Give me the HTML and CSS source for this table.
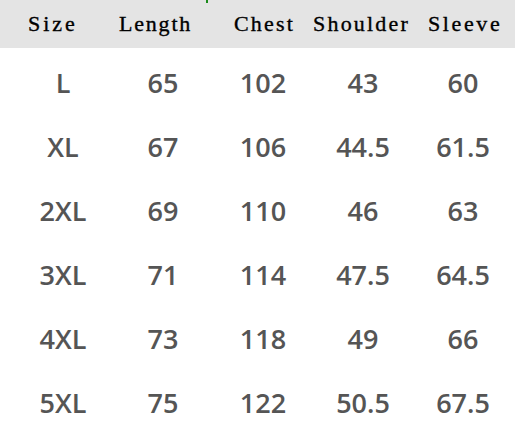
FILE: index.html
```html
<!DOCTYPE html>
<html>
<head>
<meta charset="utf-8">
<link rel="stylesheet" href="styles.css">
</head>
<body>
<div class="chart">
  <div class="head">
    <span class="mark"></span>
    <span class="h h-size">Size</span>
    <span class="h h-length">Length</span>
    <span class="h h-chest">Chest</span>
    <span class="h h-shoulder">Shoulder</span>
    <span class="h h-sleeve">Sleeve</span>
  </div>
  <div class="rows">
    <div class="c">L</div><div class="c">65</div><div class="c">102</div><div class="c">43</div><div class="c">60</div>
    <div class="c">XL</div><div class="c">67</div><div class="c">106</div><div class="c">44.5</div><div class="c">61.5</div>
    <div class="c">2XL</div><div class="c">69</div><div class="c">110</div><div class="c">46</div><div class="c">63</div>
    <div class="c">3XL</div><div class="c">71</div><div class="c">114</div><div class="c">47.5</div><div class="c">64.5</div>
    <div class="c">4XL</div><div class="c">73</div><div class="c">118</div><div class="c">49</div><div class="c">66</div>
    <div class="c">5XL</div><div class="c">75</div><div class="c">122</div><div class="c">50.5</div><div class="c">67.5</div>
  </div>
</div>
</body>
</html>
```

FILE: styles.css
```css
html, body {
  margin: 0;
  padding: 0;
  background: #ffffff;
}
.chart {
  width: 515px;
  height: 432px;
  overflow: hidden;
}
.head {
  position: relative;
  height: 48px;
  background: #e4e4e4;
  display: flex;
  align-items: center;
  padding-left: 28px;
  font-family: "Liberation Serif", "Times New Roman", serif;
  font-size: 22px;
  color: #000;
  -webkit-text-stroke: 0.35px #000;
  box-sizing: border-box;
}
.mark {
  position: absolute;
  left: 206px;
  top: 0;
  width: 2px;
  height: 3px;
  background: #1a8a1a;
}
.h { white-space: nowrap; flex: none; }
.h-size { width: 91px; letter-spacing: 3px; }
.h-length { width: 115px; letter-spacing: 1.8px; }
.h-chest { width: 79px; letter-spacing: 2.2px; }
.h-shoulder { width: 115px; letter-spacing: 2.2px; }
.h-sleeve { letter-spacing: 2.6px; }
.rows {
  display: grid;
  grid-template-columns: repeat(5, 100px);
  grid-auto-rows: 64px;
  padding-left: 13px;
  padding-top: 2px;
  font-family: "Open Sans", "Noto Sans", sans-serif;
  font-weight: 600;
  font-size: 27px;
  color: #555555;
}
.c {
  display: flex;
  align-items: center;
  justify-content: center;
}
```
